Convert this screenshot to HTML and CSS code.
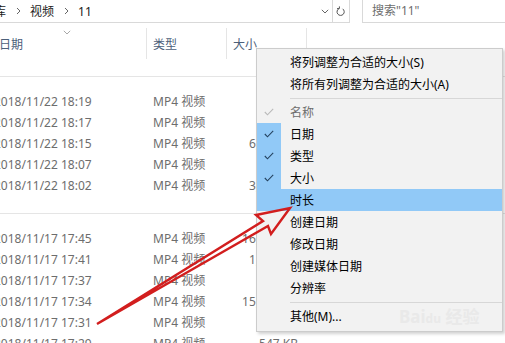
FILE: index.html
```html
<!DOCTYPE html>
<html lang="zh-CN">
  <head>
    <meta charset="UTF-8" />
    <meta name="viewport" content="width=device-width, initial-scale=1.0" />
    <title>视频 - 11</title>
    <link rel="stylesheet" href="styles.css">
  </head>
  <body>
    <div class="window">
      <div class="topbar">
        <div class="address">
          <div class="crumbs">
            <span class="crumb first">库</span>
            <span class="crumb-sep"><svg width="5" height="8" viewBox="0 0 5 8"><path d="M1 1 L4 4 L1 7" /></svg></span>
            <span class="crumb">视频</span>
            <span class="crumb-sep"><svg width="5" height="8" viewBox="0 0 5 8"><path d="M1 1 L4 4 L1 7" /></svg></span>
            <span class="crumb">11</span>
          </div>
          <span class="drop"><svg width="8" height="5" viewBox="0 0 8 5"><path d="M0.8 0.8 L4 4 L7.2 0.8" /></svg></span>
          <span class="refresh"><svg width="10" height="11" viewBox="0 0 10 11"><path d="M3 2.6 A3.6 3.6 0 1 0 6.6 2.8" /><path d="M1 2.6 L3.4 2.6 L3.4 0.4" /></svg></span>
        </div>
        <div class="search">搜索"11"</div>
      </div>

      <div class="header">
        <div class="col col-date">日期<svg class="sort" width="8" height="5" viewBox="0 0 8 5"><path d="M0.8 0.8 L4 4 L7.2 0.8" /></svg></div>
        <div class="col col-type">类型</div>
        <div class="col col-size">大小</div>
        <div class="col col-rest"></div>
      </div>

      <div class="group">
        <div class="group-line"></div>
        <div class="rows">
          <div class="row"><span class="c-date">2018/11/22 18:19</span><span class="c-type">MP4 视频</span><span class="c-size">892 KB</span></div>
          <div class="row"><span class="c-date">2018/11/22 18:17</span><span class="c-type">MP4 视频</span><span class="c-size">745 KB</span></div>
          <div class="row"><span class="c-date">2018/11/22 18:15</span><span class="c-type">MP4 视频</span><span class="c-size">6,312 KB</span></div>
          <div class="row"><span class="c-date">2018/11/22 18:07</span><span class="c-type">MP4 视频</span><span class="c-size">958 KB</span></div>
          <div class="row"><span class="c-date">2018/11/22 18:02</span><span class="c-type">MP4 视频</span><span class="c-size">3,870 KB</span></div>
        </div>
      </div>

      <div class="group">
        <div class="group-line"></div>
        <div class="rows">
          <div class="row"><span class="c-date">2018/11/17 17:45</span><span class="c-type">MP4 视频</span><span class="c-size">16,547 KB</span></div>
          <div class="row"><span class="c-date">2018/11/17 17:41</span><span class="c-type">MP4 视频</span><span class="c-size">1,254 KB</span></div>
          <div class="row"><span class="c-date">2018/11/17 17:37</span><span class="c-type">MP4 视频</span><span class="c-size">876 KB</span></div>
          <div class="row"><span class="c-date">2018/11/17 17:34</span><span class="c-type">MP4 视频</span><span class="c-size">15,093 KB</span></div>
          <div class="row"><span class="c-date">2018/11/17 17:31</span><span class="c-type">MP4 视频</span><span class="c-size">624 KB</span></div>
          <div class="row"><span class="c-date">2018/11/17 17:29</span><span class="c-type">MP4 视频</span><span class="c-size">547 KB</span></div>
        </div>
      </div>

      <div class="menu">
        <div class="item"><span class="check"></span><span class="label">将列调整为合适的大小(S)</span></div>
        <div class="item"><span class="check"></span><span class="label">将所有列调整为合适的大小(A)</span></div>
        <div class="menu-sep"><div></div></div>
        <div class="item disabled"><span class="check"><svg width="10" height="8" viewBox="0 0 10 8"><path d="M0.8 4 L3.5 6.8 L9.2 0.8" /></svg></span><span class="label">名称</span></div>
        <div class="item checked"><span class="check"><svg width="10" height="8" viewBox="0 0 10 8"><path d="M0.8 4 L3.5 6.8 L9.2 0.8" /></svg></span><span class="label">日期</span></div>
        <div class="item checked"><span class="check"><svg width="10" height="8" viewBox="0 0 10 8"><path d="M0.8 4 L3.5 6.8 L9.2 0.8" /></svg></span><span class="label">类型</span></div>
        <div class="item checked"><span class="check"><svg width="10" height="8" viewBox="0 0 10 8"><path d="M0.8 4 L3.5 6.8 L9.2 0.8" /></svg></span><span class="label">大小</span></div>
        <div class="item active"><span class="check"></span><span class="label">时长</span></div>
        <div class="item"><span class="check"></span><span class="label">创建日期</span></div>
        <div class="item"><span class="check"></span><span class="label">修改日期</span></div>
        <div class="item"><span class="check"></span><span class="label">创建媒体日期</span></div>
        <div class="item"><span class="check"></span><span class="label">分辨率</span></div>
        <div class="menu-sep"><div></div></div>
        <div class="item"><span class="check"></span><span class="label">其他(M)...</span></div>
        <div class="watermark">Bai<span>du</span> 经验</div>
      </div>

      <svg class="arrow" width="505" height="343" viewBox="0 0 505 343">
        <polygon points="97,324 263,221 256,215 290,208 271,234 268,226" />
      </svg>
    </div>
  </body>
</html>
```

FILE: styles.css
```css
body,
html {
  margin: 0;
  padding: 0;
  background-color: #ffffff;
  font-family: "Noto Sans", "Noto Sans CJK SC", sans-serif;
  font-size: 12px;
}
.window {
  position: relative;
  width: 505px;
  height: 343px;
  overflow: hidden;
}

/* address + search */
.topbar {
  display: flex;
  height: 23px;
}
.address {
  display: flex;
  align-items: center;
  box-sizing: border-box;
  width: 350px;
  height: 23px;
  border-right: 1px solid #d9d9d9;
  border-bottom: 1px solid #d9d9d9;
}
.crumbs {
  flex: 1;
  display: flex;
  align-items: center;
  color: #1a1a1a;
  margin-left: -6px;
}
.crumb-sep {
  display: inline-flex;
  justify-content: center;
  width: 24px;
}
.crumb-sep svg path,
.drop svg path,
.sort path {
  fill: none;
  stroke: #666666;
  stroke-width: 1;
}
.drop {
  display: flex;
  justify-content: center;
  width: 14px;
}
.refresh {
  display: flex;
  align-items: center;
  justify-content: center;
  width: 16px;
  height: 22px;
  border-left: 1px solid #d9d9d9;
}
.refresh svg path {
  fill: none;
  stroke: #555555;
  stroke-width: 1;
}
.search {
  flex: 1;
  margin-left: 12px;
  height: 22px;
  line-height: 22px;
  padding-left: 9px;
  border-left: 1px solid #d9d9d9;
  border-bottom: 1px solid #d9d9d9;
  color: #6d6d6d;
}

/* column header */
.header {
  display: flex;
  margin-top: 5px;
  margin-left: -8px;
  height: 31px;
  color: #4c607a;
}
.col {
  position: relative;
  box-sizing: border-box;
  display: flex;
  align-items: center;
  padding-left: 6px;
  border-right: 1px solid #e5e5e5;
}
.col-date {
  width: 155px;
  padding-left: 7px;
}
.col-type,
.col-size {
  width: 80px;
}
.col-rest {
  flex: 1;
  border-right: none;
}
.sort {
  position: absolute;
  left: 71px;
  top: 2px;
}
.sort path {
  stroke: #a8a8a8;
}

/* file groups */
.group {
  padding-top: 17px;
}
.group-line {
  height: 1px;
  background-color: #e5e5e5;
}
.rows {
  padding-top: 14px;
}
.row {
  display: flex;
  height: 21px;
  line-height: 21px;
  margin-left: -8px;
  color: #6d6d6d;
  white-space: nowrap;
}
.c-date {
  box-sizing: border-box;
  width: 155px;
  padding-left: 2px;
}
.c-type {
  box-sizing: border-box;
  width: 80px;
  padding-left: 6px;
}
.c-size {
  box-sizing: border-box;
  width: 80px;
  padding-right: 9px;
  text-align: right;
}

/* context menu */
.menu {
  position: absolute;
  left: 256px;
  top: 48px;
  box-sizing: border-box;
  width: 247px;
  padding: 2px 0 4px 0;
  background-color: #f2f2f2;
  border: 1px solid #cccccc;
  box-shadow: 2px 2px 3px rgba(0, 0, 0, 0.18);
  color: #000000;
  z-index: 5;
}
.item {
  display: flex;
  align-items: center;
  height: 22px;
}
.check {
  display: flex;
  align-items: center;
  justify-content: center;
  width: 24px;
  height: 22px;
}
.check svg path {
  fill: none;
  stroke: #24425f;
  stroke-width: 1.1;
}
.label {
  padding-left: 9px;
}
.item.checked .check {
  background-color: #91c9f7;
}
.item.active {
  background-color: #91c9f7;
}
.item.disabled {
  color: #6d6d6d;
}
.item.disabled .check svg path {
  stroke: #b9b9b9;
}
.menu-sep {
  display: flex;
  align-items: center;
  height: 6px;
}
.menu-sep div {
  flex: 1;
  height: 1px;
  margin-left: 33px;
  background-color: #d7d7d7;
}
.watermark {
  position: absolute;
  left: 142px;
  top: 254px;
  font-size: 17px;
  font-weight: bold;
  color: #e9e9e9;
  pointer-events: none;
}
.watermark span {
  font-size: 12px;
}

.arrow {
  position: absolute;
  left: 0;
  top: 0;
  pointer-events: none;
  z-index: 10;
}
.arrow polygon {
  fill: none;
  stroke: #d21e1e;
  stroke-width: 2.4;
  stroke-linejoin: miter;
}
```
